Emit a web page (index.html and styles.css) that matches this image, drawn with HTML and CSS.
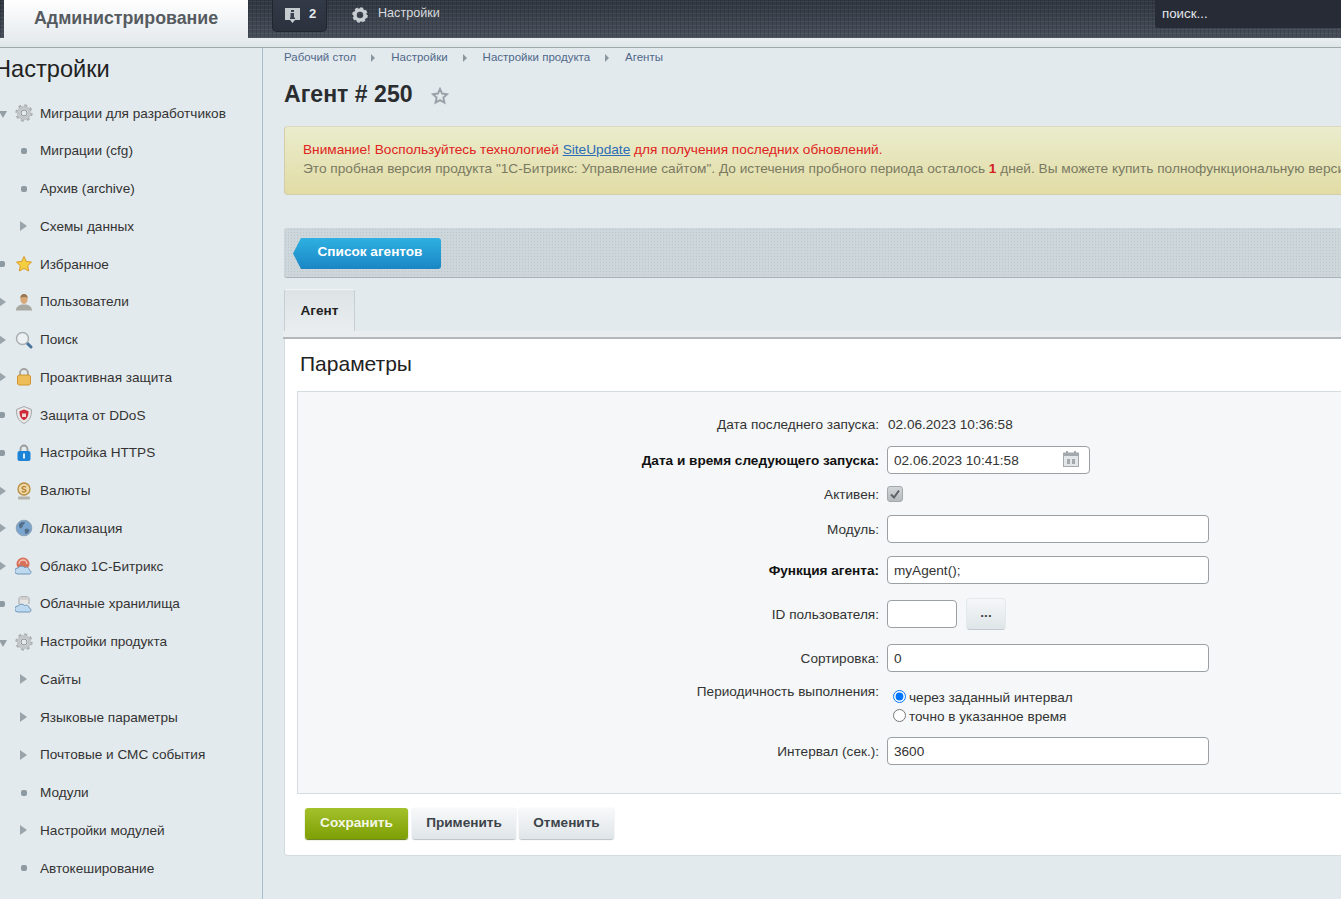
FILE: index.html
```html
<!DOCTYPE html>
<html>
	<head>
		<meta charset="UTF-8">
		<title>Агент # 250</title>
		<link rel="stylesheet" href="styles.css">
	</head>
	<body>
		<header class="topbar">
			<div class="tab-admin">Администрирование</div>
			<div class="notify">
				<svg width="16" height="17" viewBox="0 0 16 17"><path d="M0 1h15v12h-5l-2.500 3-2.500-3H0z" fill="#c6cbd0"/><rect x="6" y="3" width="3" height="2" fill="#3a4250"/><rect x="5.500" y="6" width="3.500" height="5" fill="#3a4250"/><rect x="5" y="10.500" width="5" height="1.500" fill="#3a4250"/></svg>
				<b>2</b>
			</div>
			<div class="top-link">
				<svg width="16" height="16" viewBox="0 0 16 16"><circle cx="8" cy="8" r="5" fill="none" stroke="#c9ced3" stroke-width="3.500"/><circle cx="8" cy="8" r="6.800" fill="none" stroke="#c9ced3" stroke-width="2" stroke-dasharray="3 2.340"/></svg>
				<span>Настройки</span>
			</div>
			<div class="search">поиск...</div>
		</header>
		<div class="subbar"></div>

		<div class="layout">
			<aside class="sidebar">
				<h2>Настройки</h2>
				<ul class="menu">
					<li><i class="mark down"></i><svg class="ico" viewBox="0 0 18 18"><use href="#i-gear"/></svg><span>Миграции для разработчиков</span></li>
					<li class="sub"><i class="mark dot"></i><span>Миграции (cfg)</span></li>
					<li class="sub"><i class="mark dot"></i><span>Архив (archive)</span></li>
					<li class="sub"><i class="mark right"></i><span>Схемы данных</span></li>
					<li><i class="mark dot"></i><svg class="ico" viewBox="0 0 18 18"><path d="M9 1.500l2.300 4.900 5.200.7-3.800 3.600 1 5.300L9 13.400 4.300 16l1-5.300L1.500 7.100l5.200-.7z" fill="#f6cf3e" stroke="#d99a2b"/></svg><span>Избранное</span></li>
					<li><i class="mark right"></i><svg class="ico" viewBox="0 0 18 18"><path d="M1 17.500c0-4 3-5 5.500-6h5c2.500 1 5.500 2 5.500 6z" fill="#a9a9a4"/><ellipse cx="9" cy="6" rx="3.600" ry="5" fill="#d9a878"/><path d="M5.300 5C5.500 2 7 1 9 1s3.500 1 3.700 4C11 3.500 7 3.500 5.300 5z" fill="#9a7650"/></svg><span>Пользователи</span></li>
					<li><i class="mark right"></i><svg class="ico" viewBox="0 0 18 18"><path d="M11 11l5 5" stroke="#47729c" stroke-width="3" stroke-linecap="round"/><circle cx="7.500" cy="7.500" r="6" fill="#eef1f3" stroke="#a9aeb2" stroke-width="1.500"/></svg><span>Поиск</span></li>
					<li><i class="mark right"></i><svg class="ico" viewBox="0 0 18 18"><path d="M5 8V5a4 4 0 0 1 8 0v3" fill="none" stroke="#a5a5a0" stroke-width="1.800"/><rect x="2.500" y="7" width="13" height="10" rx="2" fill="#edbe58" stroke="#d0952e"/></svg><span>Проактивная защита</span></li>
					<li><i class="mark dot"></i><svg class="ico" viewBox="0 0 18 18"><path d="M9 .5l7.500 3c0 7-1.500 11-7.500 14-6-3-7.500-7-7.500-14z" fill="#e8e8e8" stroke="#a7a7a7"/><path d="M9 3.500l4.500 1.800c0 4.500-1 7-4.500 9-3.500-2-4.500-4.500-4.500-9z" fill="#cd2a3c"/><rect x="7" y="7.500" width="4" height="3.500" fill="#f2d6d6"/></svg><span>Защита от DDoS</span></li>
					<li><i class="mark dot"></i><svg class="ico" viewBox="0 0 18 18"><path d="M5.500 8V5a3.500 3.500 0 0 1 7 0v3" fill="none" stroke="#9a9a9a" stroke-width="1.800"/><rect x="2.500" y="7" width="13" height="10" rx="2" fill="#1d83d6"/><rect x="8" y="9.500" width="2" height="5" fill="#d6ecfb"/></svg><span>Настройка HTTPS</span></li>
					<li><i class="mark right"></i><svg class="ico" viewBox="0 0 18 18"><circle cx="9" cy="7" r="6" fill="#edd9a6" stroke="#b98c3f" stroke-width="1.300"/><path d="M11 5.200C9.500 4 7 4.500 7 6c0 1.700 4 1 4 2.600 0 1.500-2.600 1.800-4 .6" fill="none" stroke="#b3782a" stroke-width="1.200"/><rect x="3" y="14.500" width="12" height="3" rx="1" fill="#b4b4ac"/></svg><span>Валюты</span></li>
					<li><i class="mark right"></i><svg class="ico" viewBox="0 0 18 18"><circle cx="9" cy="9" r="7.800" fill="#7aa5cf" stroke="#8ea3b5"/><path d="M4 5c2-2 5-2.500 6-1.500-.5 2-2 1.500-2 3.500 0 1.500-1.500 1-2 2.500C5 9.500 3.500 8 4 5zM10 10c2-.5 4 0 4.500 1-.5 2.500-2.500 4-4 4-.5-1.500-1.500-3.500-.5-5z" fill="#55708a"/></svg><span>Локализация</span></li>
					<li><i class="mark right"></i><svg class="ico" viewBox="0 0 18 18"><circle cx="8" cy="7" r="6.500" fill="#d9705a"/><path d="M4 7a4 4 0 0 1 8 0" fill="none" stroke="#f2c9bc" stroke-width="1.300"/><path d="M2.500 17a3 3 0 0 1 .5-6c1-2 5-2.500 6.500-.5 3-1 5 1 4.500 2.500 2 0 3 3.500.5 4z" fill="#bcd9f0" stroke="#6f95b5"/></svg><span>Облако 1С-Битрикс</span></li>
					<li><i class="mark dot"></i><svg class="ico" viewBox="0 0 18 18"><path d="M4 9V3c0-2 10-2 10 0v6" fill="#e6e6e6" stroke="#a3a3a3"/><ellipse cx="9" cy="3.200" rx="5" ry="1.700" fill="#cfcfcf"/><path d="M2.500 17a3 3 0 0 1 .5-6c1-2 5-2.500 6.500-.5 3-1 5 1 4.500 2.500 2 0 3 3.500.5 4z" fill="#bcd9f0" stroke="#6f95b5"/></svg><span>Облачные хранилища</span></li>
					<li><i class="mark down"></i><svg class="ico" viewBox="0 0 18 18"><use href="#i-gear"/></svg><span>Настройки продукта</span></li>
					<li class="sub"><i class="mark right"></i><span>Сайты</span></li>
					<li class="sub"><i class="mark right"></i><span>Языковые параметры</span></li>
					<li class="sub"><i class="mark right"></i><span>Почтовые и СМС события</span></li>
					<li class="sub"><i class="mark dot"></i><span>Модули</span></li>
					<li class="sub"><i class="mark right"></i><span>Настройки модулей</span></li>
					<li class="sub"><i class="mark dot"></i><span>Автокеширование</span></li>
				</ul>
			</aside>

			<main class="main">
				<nav class="crumbs">
					<a>Рабочий стол</a><i></i><a>Настройки</a><i></i><a>Настройки продукта</a><i></i><a>Агенты</a>
				</nav>
				<div class="title-row">
					<h1>Агент # 250</h1>
					<svg width="18" height="18" viewBox="0 0 18 18"><path d="M9 2l2.100 4.600 5 .6-3.700 3.400 1 5L9 13.100l-4.400 2.500 1-5L1.900 7.200l5-.6z" fill="#e4e9ec" stroke="#99a3aa" stroke-width="2"/></svg>
				</div>

				<div class="alert">
					<p class="warn">Внимание! Воспользуйтесь технологией <a>SiteUpdate</a> для получения последних обновлений.</p>
					<p>Это пробная версия продукта "1С-Битрикс: Управление сайтом". До истечения пробного периода осталось <b>1</b> дней. Вы можете купить полнофункциональную версию продукта.</p>
				</div>

				<div class="toolbar">
					<a class="btn-back">Список агентов</a>
				</div>

				<div class="tabs"><div class="tab">Агент</div></div>
				<div class="tabs-line"></div>

				<section class="panel">
					<h3>Параметры</h3>
					<div class="form">
						<label>Дата последнего запуска:</label>
						<div class="val">02.06.2023 10:36:58</div>

						<label class="req">Дата и время следующего запуска:</label>
						<div class="date-wrap">
							<input class="inp inp-date" type="text" value="02.06.2023 10:41:58">
							<svg class="cal" width="16" height="16" viewBox="0 0 16 16"><rect x="0.500" y="2" width="15" height="13.500" fill="#e3e6e8" stroke="#a3a9ad"/><rect x="0" y="2" width="16" height="3" fill="#a3a9ad"/><rect x="3" y="0" width="2" height="3" fill="#a3a9ad"/><rect x="11" y="0" width="2" height="3" fill="#a3a9ad"/><rect x="4" y="8" width="3" height="5" fill="#a3a9ad"/><rect x="9" y="8" width="3" height="5" fill="#a3a9ad"/></svg>
						</div>

						<label>Активен:</label>
						<div class="check"><svg width="12" height="12" viewBox="0 0 12 12"><path d="M2 6.500l3 3 5-7" fill="none" stroke="#5c6266" stroke-width="2"/></svg></div>

						<label>Модуль:</label>
						<input class="inp inp-wide" type="text" value="">

						<label class="req">Функция агента:</label>
						<input class="inp inp-wide" type="text" value="myAgent();">

						<label>ID пользователя:</label>
						<div class="user-row">
							<input class="inp inp-short" type="text" value="">
							<button class="btn-dots">...</button>
						</div>

						<label>Сортировка:</label>
						<input class="inp inp-wide" type="text" value="0">

						<label class="top">Периодичность выполнения:</label>
						<div class="radios">
							<div class="radio"><input type="radio" name="period" checked><span>через заданный интервал</span></div>
							<div class="radio"><input type="radio" name="period"><span>точно в указанное время</span></div>
						</div>

						<label>Интервал (сек.):</label>
						<input class="inp inp-wide" type="text" value="3600">
					</div>
					<div class="actions">
						<button class="btn btn-save">Сохранить</button>
						<button class="btn btn-apply">Применить</button>
						<button class="btn btn-cancel">Отменить</button>
					</div>
				</section>
			</main>
		</div>

		<svg class="defs" width="0" height="0">
			<symbol id="i-gear" viewBox="0 0 18 18">
				<circle cx="9" cy="9" r="5.500" fill="none" stroke="#c2c6c8" stroke-width="3.500"/>
				<circle cx="9" cy="9" r="7.700" fill="none" stroke="#adb1b3" stroke-width="2" stroke-dasharray="3 3.050"/>
				<circle cx="9" cy="9" r="3" fill="none" stroke="#8d9194"/>
			</symbol>
		</svg>
	</body>
</html>
```

FILE: styles.css
```css
html, body{
	margin: 0;
	padding: 0;
	height: 899px;
	overflow: hidden;
}
body{
	background: #e3eaed;
	font-family: "Liberation Sans", Arial, sans-serif;
	font-size: 13.6px;
	color: #333;
}
h1, h2, h3, p, ul{
	margin: 0;
	padding: 0;
}
li{
	list-style: none;
}
.defs{
	display: block;
	height: 0;
}

/* top */
.topbar{
	height: 38px;
	display: flex;
	background-color: #3f4653;
	background-image:
		repeating-linear-gradient(0deg, rgba(255,255,255,.05) 0 1px, transparent 1px 4px),
		repeating-linear-gradient(90deg, rgba(0,0,0,.12) 0 1px, transparent 1px 4px),
		linear-gradient(#30363f, #474f5b);
}
.tab-admin{
	width: 244px;
	margin-left: 4px;
	box-sizing: border-box;
	padding: 8px 0 0 30px;
	background: linear-gradient(#fff, #e7ecef);
	font-size: 17.8px;
	font-weight: bold;
	color: #555b60;
}
.notify{
	width: 55px;
	height: 32px;
	margin-left: 24px;
	box-sizing: border-box;
	padding: 6px 0 0 12px;
	display: flex;
	gap: 8px;
	align-items: flex-start;
	background: linear-gradient(#333a47, #2b313d);
	border: 1px solid #20252e;
	border-top: 0;
	border-radius: 0 0 5px 5px;
	color: #e6e9ec;
}
.notify svg{
	margin-top: 1px;
}
.notify b{
	font-size: 13px;
}
.top-link{
	margin-left: 25px;
	display: flex;
	gap: 10px;
	align-items: flex-start;
	padding-top: 6px;
	color: #d7dbdf;
	font-size: 12.6px;
}
.top-link svg{
	margin-top: 1px;
}
.search{
	width: 200px;
	height: 28px;
	margin-left: auto;
	margin-right: -14px;
	box-sizing: border-box;
	padding: 6px 0 0 7px;
	background: #272b36;
	border-radius: 0 0 0 3px;
	color: #e4e8eb;
	font-size: 13.3px;
}
.subbar{
	height: 9px;
	border-bottom: 1px solid #a0a8ac;
	background: linear-gradient(#e9eef0, #dfe6e9);
}

.layout{
	display: flex;
	height: 851px;
}

/* left menu */
.sidebar{
	width: 262px;
	flex: none;
	border-right: 1px solid #a7bccb;
	overflow: hidden;
}
.sidebar h2{
	margin-left: -6px;
	height: 46.3px;
	font-size: 23.6px;
	line-height: 42px;
	font-weight: normal;
	color: #222;
}
.menu li{
	display: grid;
	grid-template-columns: 15px 18px 1fr;
	align-items: center;
	height: 37.75px;
	color: #333;
}
.menu li > span{
	grid-column: 3;
	padding-left: 7px;
}
.menu li.sub .mark{
	grid-column: 2;
	justify-self: center;
}
.ico{
	width: 18px;
	height: 18px;
	grid-column: 2;
	justify-self: center;
}
.mark{
	display: block;
	grid-column: 1;
}
.mark.dot{
	width: 6px;
	height: 6px;
	border-radius: 2px;
	background: #8e9aa2;
}
.menu li:not(.sub) .mark.dot{
	margin-left: -1px;
}
.mark.right{
	width: 0;
	height: 0;
	border-left: 7px solid #9aa5ab;
	border-top: 5px solid transparent;
	border-bottom: 5px solid transparent;
}
.menu li.sub .mark.right{
	margin-left: -1px;
}
.menu li:not(.sub) .mark.right{
	margin-left: -1px;
}
.mark.down{
	width: 0;
	height: 0;
	margin-top: 3px;
	border-top: 7px solid #939ea5;
	border-left: 4px solid transparent;
	border-right: 4px solid transparent;
	margin-left: -1px;
}

/* main */
.main{
	flex: 1;
	min-width: 0;
	padding-left: 21px;
	overflow: hidden;
}
.crumbs{
	height: 18px;
	display: flex;
	align-items: center;
	font-size: 11.5px;
	color: #50688a;
}
.crumbs i{
	width: 0;
	height: 0;
	margin: 1px 16px 0 15px;
	border-left: 4px solid #8b979f;
	border-top: 4px solid transparent;
	border-bottom: 4px solid transparent;
}
.title-row{
	height: 56px;
	display: flex;
	align-items: center;
	gap: 18px;
}
.title-row h1{
	font-size: 23.1px;
	color: #2a2d30;
}
.title-row svg{
	margin-top: 3px;
}
.alert{
	margin-top: 4px;
	margin-right: -10px;
	height: 69px;
	box-sizing: border-box;
	padding: 13px 18px;
	border: 1px solid #d3cdaa;
	border-top-color: #ddd9c0;
	border-radius: 4px;
	background: linear-gradient(#eaeccd, #e2dca5);
	color: #7a7a62;
	font-size: 13.68px;
	line-height: 19px;
	white-space: nowrap;
}
.alert .warn{
	color: #e0231c;
}
.alert a{
	color: #2a6db8;
	text-decoration: underline;
}
.alert b{
	color: #d41f1f;
}
.toolbar{
	margin-top: 33px;
	margin-right: -10px;
	height: 50px;
	box-sizing: border-box;
	padding: 10px 0 0 9px;
	border-radius: 3px;
	border-bottom: 1px solid #aab4b8;
	background-color: #cdd6da;
	background-image: radial-gradient(#bcc6ca 1px, transparent 1px);
	background-size: 3px 3px;
}
.btn-back{
	display: flex;
	align-items: center;
	justify-content: center;
	width: 148px;
	height: 31px;
	box-sizing: border-box;
	padding: 0 0 5px 6px;
	font-size: 13.6px;
	font-weight: bold;
	color: #fff;
	background: linear-gradient(#2eb0e2, #1a86c4);
	clip-path: polygon(8px 0, 100% 0, 100% 100%, 8px 100%, 0 50%);
	border-radius: 0 3px 3px 0;
}
.tabs{
	margin-top: 11px;
	display: flex;
}
.tab{
	width: 71px;
	height: 42px;
	box-sizing: border-box;
	padding-top: 13px;
	text-align: center;
	border: 1px solid #c7cfd3;
	border-bottom: 0;
	border-top-color: #f2f5f6;
	border-radius: 3px 3px 0 0;
	background: linear-gradient(#dde3e6, #e9edef);
	font-size: 13.6px;
	font-weight: bold;
	color: #222;
}
.tabs-line{
	height: 6px;
	margin-left: -1px;
	margin-right: -10px;
	border-bottom: 2px solid #b2b7ba;
	background: #e9edef;
}
.panel{
	height: 517px;
	margin-right: -10px;
	box-sizing: border-box;
	border: 1px solid #d5dcdf;
	border-top: 0;
	border-radius: 0 0 4px 4px;
	background: #fff;
}
.panel h3{
	height: 52px;
	padding-left: 15px;
	font-size: 21px;
	font-weight: normal;
	line-height: 49px;
	color: #222;
}
.form{
	margin-left: 12px;
	height: 403px;
	box-sizing: border-box;
	padding-top: 15px;
	border: 1px solid #d5dcdf;
	border-right: 0;
	background: #f5f7f8;
	display: grid;
	grid-template-columns: 581px 1fr;
	grid-template-rows: 34px 38px 30px 40px 42px 46px 42px 54px 36px;
	column-gap: 8px;
	align-items: center;
}
.form label{
	text-align: right;
}
.form label.req{
	font-weight: bold;
	color: #111;
}
.form label.top{
	align-self: start;
	padding-top: 5px;
}
.val{
	padding-left: 1px;
}
.inp{
	height: 28px;
	box-sizing: border-box;
	padding: 0 6px;
	border: 1px solid #9aa0a3;
	border-radius: 4px;
	background: #fff;
	font-family: inherit;
	font-size: 13.6px;
	color: #333;
}
.inp-wide{
	width: 322px;
}
.inp-date{
	width: 203px;
}
.inp-short{
	width: 70px;
}
.date-wrap{
	position: relative;
	width: 203px;
	height: 28px;
}
.cal{
	position: absolute;
	left: 176px;
	top: 5px;
}
.check{
	width: 16px;
	height: 16px;
	box-sizing: border-box;
	padding: 1px 0 0 1px;
	border: 1px solid #a3a8ab;
	border-radius: 3px;
	background: linear-gradient(#d2d6d8, #b5babd);
}
.user-row{
	display: flex;
	align-items: center;
	gap: 9px;
}
.btn-dots{
	width: 40px;
	height: 32px;
	padding: 0 0 4px;
	border: 1px solid #e3e8ea;
	border-bottom-color: #c3cace;
	border-radius: 4px;
	background: linear-gradient(#f5f7f8, #dfe5e8);
	font-family: inherit;
	font-size: 13.6px;
	font-weight: bold;
	color: #444;
}
.radios{
	padding: 2px 0 0 6px;
	line-height: 19px;
}
.radio{
	display: flex;
	align-items: center;
	gap: 3px;
	height: 19px;
}
.radio input{
	margin: 0;
	width: 13px;
	height: 13px;
	position: relative;
	top: -1px;
}
.actions{
	display: flex;
	padding: 14px 0 0 20px;
	gap: 4px;
}
.btn{
	height: 31px;
	padding: 0 0 2px;
	border: 0;
	border-radius: 3px;
	font-family: inherit;
	font-size: 13.6px;
	font-weight: bold;
}
.btn-save{
	width: 103px;
	color: #f4f8e6;
	background: linear-gradient(#a3c12a, #7f9f06);
	box-shadow: 0 1px 1px #5f7a10;
}
.btn-apply, .btn-cancel{
	color: #3c4449;
	background: linear-gradient(#f8f9fa, #dfe5e9);
	box-shadow: 0 1px 1px #b9c1c5, 0 0 1px #c9cfd2;
}
.btn-apply{
	width: 104px;
}
.btn-cancel{
	width: 95px;
	margin-left: -1px;
}
```
